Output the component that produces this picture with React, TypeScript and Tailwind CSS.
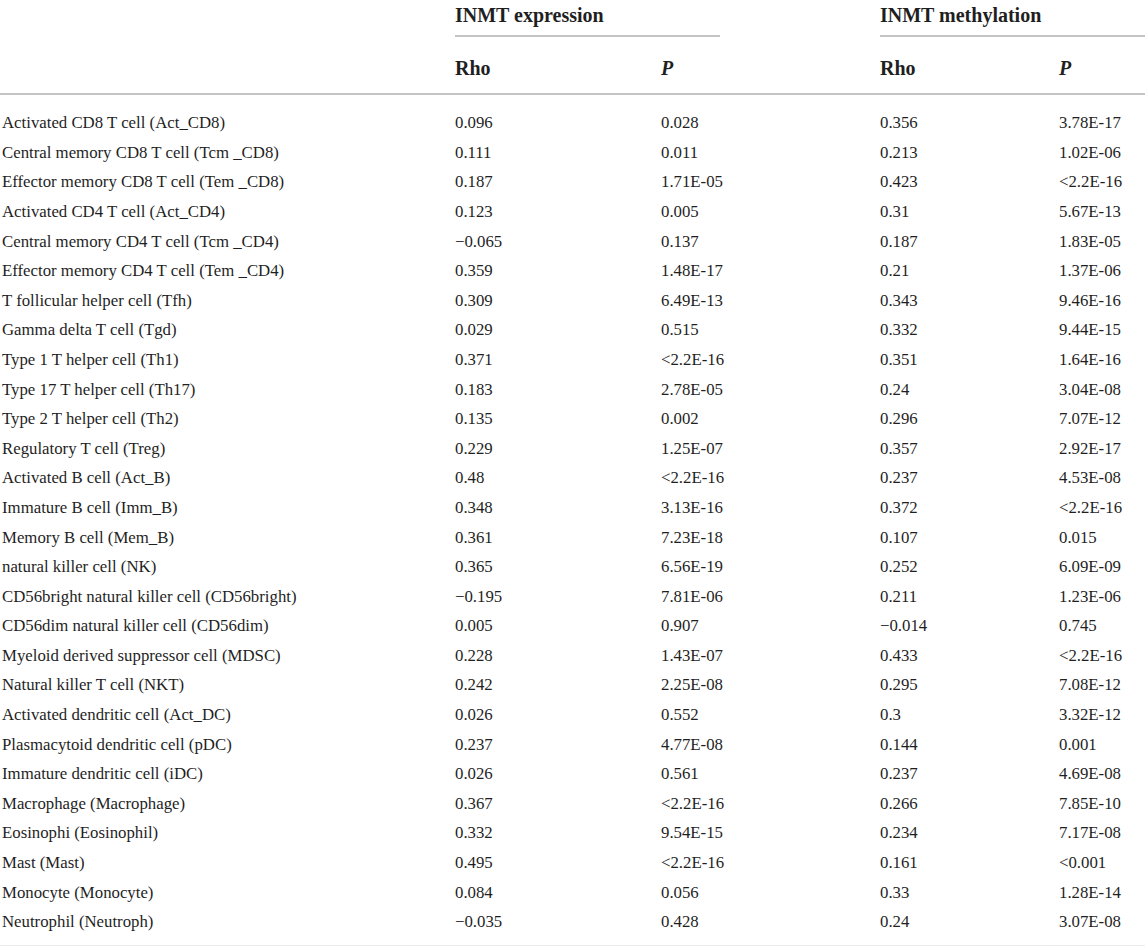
const rows: [string, string, string, string, string][] = [
  ["Activated CD8 T cell (Act_CD8)", "0.096", "0.028", "0.356", "3.78E-17"],
  ["Central memory CD8 T cell (Tcm _CD8)", "0.111", "0.011", "0.213", "1.02E-06"],
  ["Effector memory CD8 T cell (Tem _CD8)", "0.187", "1.71E-05", "0.423", "<2.2E-16"],
  ["Activated CD4 T cell (Act_CD4)", "0.123", "0.005", "0.31", "5.67E-13"],
  ["Central memory CD4 T cell (Tcm _CD4)", "\u22120.065", "0.137", "0.187", "1.83E-05"],
  ["Effector memory CD4 T cell (Tem _CD4)", "0.359", "1.48E-17", "0.21", "1.37E-06"],
  ["T follicular helper cell (Tfh)", "0.309", "6.49E-13", "0.343", "9.46E-16"],
  ["Gamma delta T cell (Tgd)", "0.029", "0.515", "0.332", "9.44E-15"],
  ["Type 1 T helper cell (Th1)", "0.371", "<2.2E-16", "0.351", "1.64E-16"],
  ["Type 17 T helper cell (Th17)", "0.183", "2.78E-05", "0.24", "3.04E-08"],
  ["Type 2 T helper cell (Th2)", "0.135", "0.002", "0.296", "7.07E-12"],
  ["Regulatory T cell (Treg)", "0.229", "1.25E-07", "0.357", "2.92E-17"],
  ["Activated B cell (Act_B)", "0.48", "<2.2E-16", "0.237", "4.53E-08"],
  ["Immature B cell (Imm_B)", "0.348", "3.13E-16", "0.372", "<2.2E-16"],
  ["Memory B cell (Mem_B)", "0.361", "7.23E-18", "0.107", "0.015"],
  ["natural killer cell (NK)", "0.365", "6.56E-19", "0.252", "6.09E-09"],
  ["CD56bright natural killer cell (CD56bright)", "\u22120.195", "7.81E-06", "0.211", "1.23E-06"],
  ["CD56dim natural killer cell (CD56dim)", "0.005", "0.907", "\u22120.014", "0.745"],
  ["Myeloid derived suppressor cell (MDSC)", "0.228", "1.43E-07", "0.433", "<2.2E-16"],
  ["Natural killer T cell (NKT)", "0.242", "2.25E-08", "0.295", "7.08E-12"],
  ["Activated dendritic cell (Act_DC)", "0.026", "0.552", "0.3", "3.32E-12"],
  ["Plasmacytoid dendritic cell (pDC)", "0.237", "4.77E-08", "0.144", "0.001"],
  ["Immature dendritic cell (iDC)", "0.026", "0.561", "0.237", "4.69E-08"],
  ["Macrophage (Macrophage)", "0.367", "<2.2E-16", "0.266", "7.85E-10"],
  ["Eosinophi (Eosinophil)", "0.332", "9.54E-15", "0.234", "7.17E-08"],
  ["Mast (Mast)", "0.495", "<2.2E-16", "0.161", "<0.001"],
  ["Monocyte (Monocyte)", "0.084", "0.056", "0.33", "1.28E-14"],
  ["Neutrophil (Neutroph)", "\u22120.035", "0.428", "0.24", "3.07E-08"],
];

const cols = "grid grid-cols-[455px_206px_219px_179px_86px]";

export default function App() {
  return (
    <div className="w-[1145px] min-h-[946px] bg-white text-[#1f1f1f] font-['Liberation_Serif',serif] text-[16.8px]">
      {/* group headings */}
      <div className={`${cols} h-[37px]`}>
        <div />
        <div className="col-span-2">
          <div className="w-[265px] h-[37px] border-b-2 border-[#c4c4c4] font-bold text-[20px]">INMT expression</div>
        </div>
        <div className="col-span-2">
          <div className="w-[265px] h-[37px] border-b-2 border-[#c4c4c4] font-bold text-[20px]">INMT methylation</div>
        </div>
      </div>
      <div className={`${cols} h-[58px] border-b-2 border-[#c4c4c4] items-center pt-[5px] font-bold text-[20px]`}>
        <div />
        <div>Rho</div>
        <div className="italic">P</div>
        <div>Rho</div>
        <div className="italic">P</div>
      </div>
      <div className="pt-[13px] pb-[8px] border-b-2 border-[#ececec]">
        {rows.map((r) => (
          <div key={r[0]} className={`${cols} h-[29.6px] items-center`}>
            <div className="pl-[2px]">{r[0]}</div>
            <div>{r[1]}</div>
            <div>{r[2]}</div>
            <div>{r[3]}</div>
            <div className="whitespace-nowrap">{r[4]}</div>
          </div>
        ))}
      </div>
    </div>
  );
}
